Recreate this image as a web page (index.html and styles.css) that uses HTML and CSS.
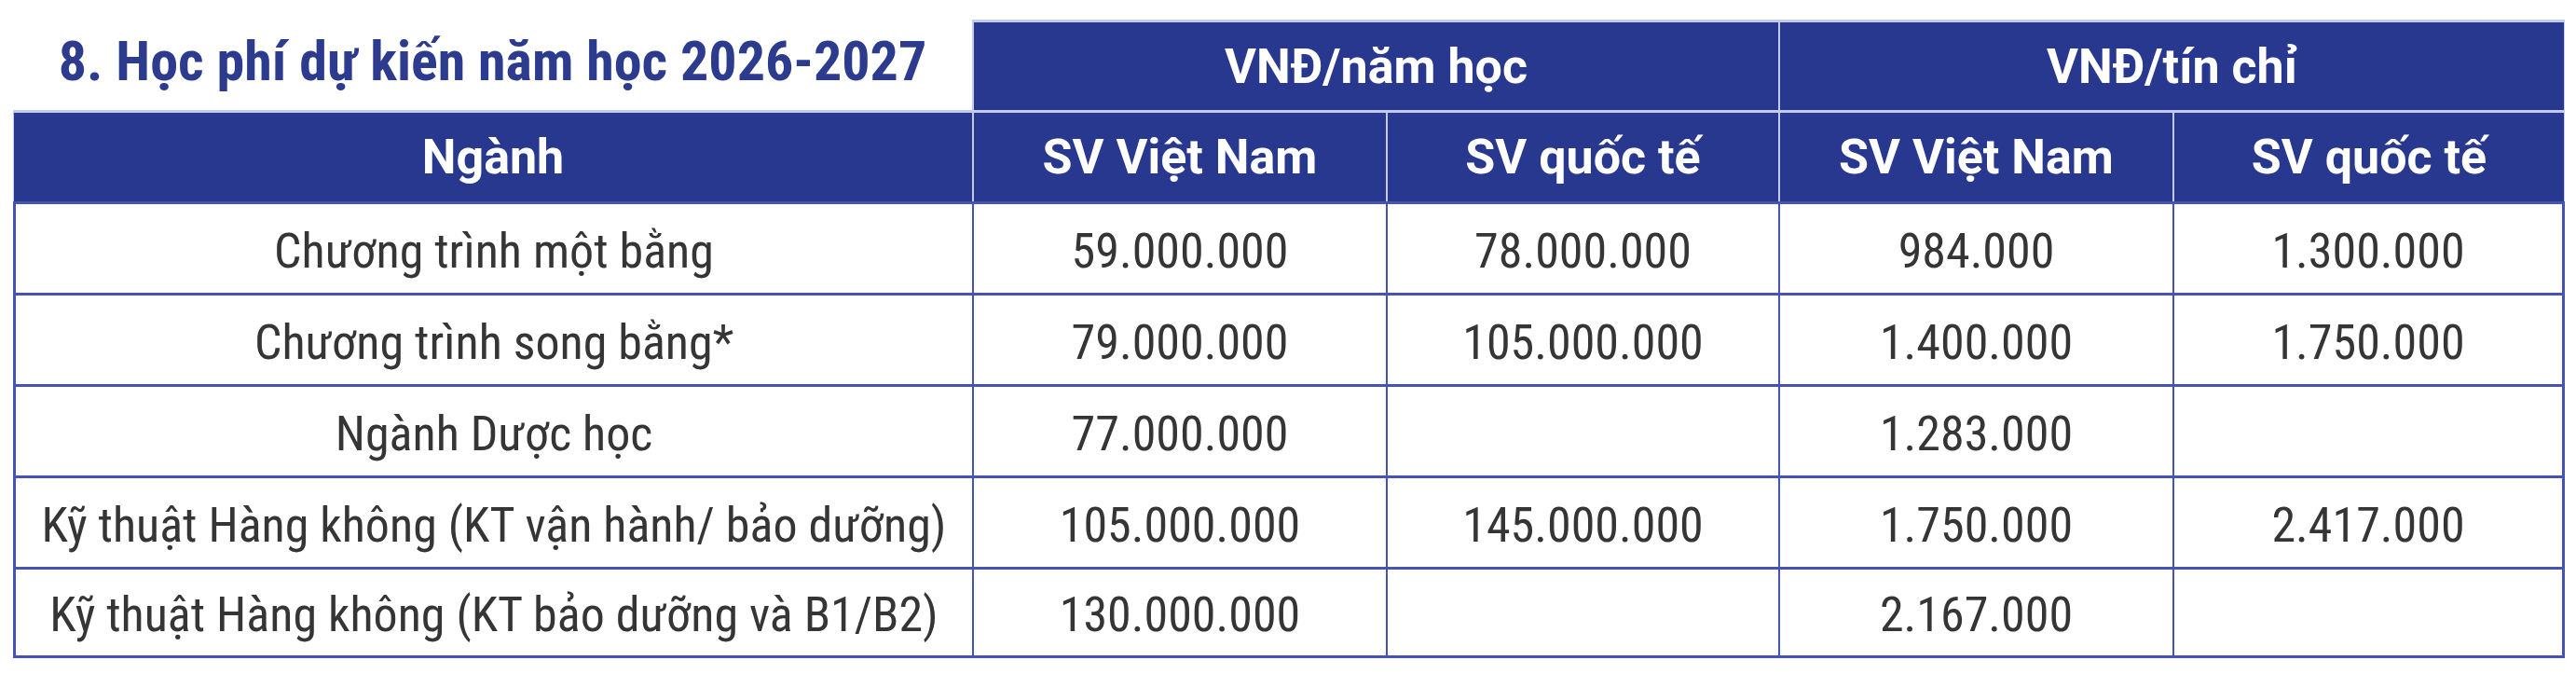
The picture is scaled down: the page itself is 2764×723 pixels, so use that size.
FILE: index.html
```html
<!DOCTYPE html>
<html lang="vi">
<head>
<meta charset="utf-8">
<title>Học phí dự kiến năm học 2026-2027</title>
<link rel="stylesheet" href="styles.css">
</head>
<body>
<div class="fee">
  <div class="title">8. Học phí dự kiến năm học 2026-2027</div>
  <div class="hd span2">VNĐ/năm học</div>
  <div class="hd span2 end">VNĐ/tín chỉ</div>

  <div class="hd first">Ngành</div>
  <div class="hd">SV Việt Nam</div>
  <div class="hd">SV quốc tế</div>
  <div class="hd">SV Việt Nam</div>
  <div class="hd end">SV quốc tế</div>

  <div class="c name">Chương trình một bằng</div>
  <div class="c">59.000.000</div>
  <div class="c">78.000.000</div>
  <div class="c">984.000</div>
  <div class="c end">1.300.000</div>

  <div class="c name">Chương trình song bằng*</div>
  <div class="c">79.000.000</div>
  <div class="c">105.000.000</div>
  <div class="c">1.400.000</div>
  <div class="c end">1.750.000</div>

  <div class="c name">Ngành Dược học</div>
  <div class="c">77.000.000</div>
  <div class="c"></div>
  <div class="c">1.283.000</div>
  <div class="c end"></div>

  <div class="c name">Kỹ thuật Hàng không (KT vận hành/ bảo dưỡng)</div>
  <div class="c">105.000.000</div>
  <div class="c">145.000.000</div>
  <div class="c">1.750.000</div>
  <div class="c end">2.417.000</div>

  <div class="c name bot">Kỹ thuật Hàng không (KT bảo dưỡng và B1/B2)</div>
  <div class="c bot">130.000.000</div>
  <div class="c bot"></div>
  <div class="c bot">2.167.000</div>
  <div class="c end bot"></div>
</div>
</body>
</html>
```

FILE: styles.css
```css
html, body {
  margin: 0;
  padding: 0;
  background: #ffffff;
}

.fee {
  display: grid;
  grid-template-columns: 1029px 444px 421px 423px 421px;
  grid-template-rows: 97px 98px repeat(5, 98px);
  width: 2738px;
  margin: 21px 0 0 14px;
}

.title {
  display: flex;
  align-items: center;
  justify-content: center;
  padding-bottom: 9px;
  box-sizing: border-box;
  font-family: "Roboto Condensed", "Liberation Sans Narrow", Roboto, sans-serif;
  font-stretch: condensed;
  font-weight: 700;
  font-size: 60px;
  color: #2d3b8e;
  white-space: nowrap;
}

.hd {
  display: flex;
  align-items: center;
  justify-content: center;
  box-sizing: border-box;
  background: #29388f;
  color: #ffffff;
  font-family: Roboto, "Liberation Sans", sans-serif;
  font-weight: 700;
  font-size: 52px;
  border-top: 3px solid #c4c9ee;
  border-left: 2px solid #c4c9ee;
  white-space: nowrap;
}

.hd.first {
  border-left: 1px solid #c4c9ee;
}

.hd.end {
  border-right: 1px solid #c4c9ee;
}

.span2 {
  grid-column: span 2;
}

.c {
  display: flex;
  align-items: center;
  justify-content: center;
  box-sizing: border-box;
  padding-top: 5px;
  font-family: "Roboto Condensed", "Liberation Sans Narrow", Roboto, sans-serif;
  font-stretch: condensed;
  font-weight: 400;
  font-size: 52px;
  color: #353535;
  border-top: 3px solid #4554b4;
  border-left: 2px solid #4554b4;
  white-space: nowrap;
}

.c.name {
  border-left-width: 3px;
}

.c.end {
  border-right: 3px solid #4554b4;
}

.c.bot {
  border-bottom: 3px solid #4554b4;
}
```
